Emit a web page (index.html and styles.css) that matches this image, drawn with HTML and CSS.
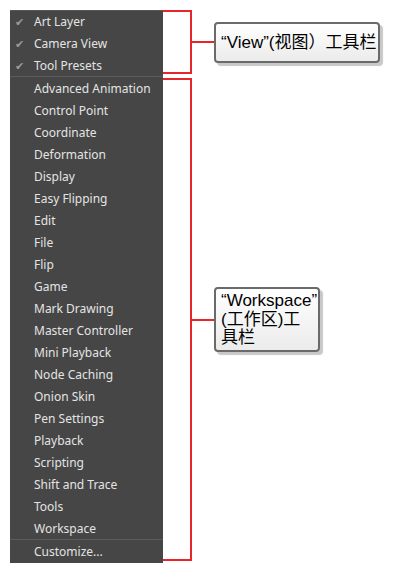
FILE: index.html
```html
<!DOCTYPE html>
<html>
<head>
<meta charset="utf-8">
<link rel="stylesheet" href="styles.css">
</head>
<body>
<div class="page">
  <div class="menu">
    <div class="item checked"><span class="check">✔</span>Art Layer</div>
    <div class="item checked"><span class="check">✔</span>Camera View</div>
    <div class="item checked"><span class="check">✔</span>Tool Presets</div>
    <div class="sep"></div>
    <div class="item">Advanced Animation</div>
    <div class="item">Control Point</div>
    <div class="item">Coordinate</div>
    <div class="item">Deformation</div>
    <div class="item">Display</div>
    <div class="item">Easy Flipping</div>
    <div class="item">Edit</div>
    <div class="item">File</div>
    <div class="item">Flip</div>
    <div class="item">Game</div>
    <div class="item">Mark Drawing</div>
    <div class="item">Master Controller</div>
    <div class="item">Mini Playback</div>
    <div class="item">Node Caching</div>
    <div class="item">Onion Skin</div>
    <div class="item">Pen Settings</div>
    <div class="item">Playback</div>
    <div class="item">Scripting</div>
    <div class="item">Shift and Trace</div>
    <div class="item">Tools</div>
    <div class="item">Workspace</div>
    <div class="sep"></div>
    <div class="item">Customize...</div>
  </div>
  <div class="notes">
    <div class="group g1">
      <div class="bracket b1"></div>
      <div class="stub"></div>
      <div class="callout c1">“View”(视图）工具栏</div>
    </div>
    <div class="group g2">
      <div class="bracket b2"></div>
      <div class="stub"></div>
      <div class="callout c2">“Workspace”<br>(工作区)工<br>具栏</div>
    </div>
  </div>
</div>
</body>
</html>
```
FILE: styles.css
```css
html, body {
  margin: 0;
  padding: 0;
  background: #ffffff;
}
.page {
  display: flex;
  align-items: flex-start;
  padding: 10px 0 0 10px;
}
.menu {
  width: 153px;
  background: #464646;
  box-shadow: inset 0 1px 0 #575757;
  padding-bottom: 1px;
  font-family: "Noto Sans", "Open Sans", sans-serif;
  font-size: 12px;
  color: #e4e4e4;
}
.item {
  position: relative;
  height: 21px;
  padding-top: 1px;
  line-height: 22px;
  padding-left: 24px;
  white-space: nowrap;
}
.check {
  position: absolute;
  left: 5px;
  top: 1px;
  font-size: 11px;
  color: #9a9a9a;
}
.sep {
  height: 1px;
  background: #5c5c5c;
}
.notes {
  display: flex;
  flex-direction: column;
  gap: 4px;
}
.group {
  display: flex;
  align-items: center;
}
.bracket {
  width: 27px;
  border: 2px solid #e5262b;
  border-left: none;
}
.b1 { height: 60px; }
.b2 { height: 479px; }
.stub {
  width: 22px;
  height: 2px;
  background: #e5262b;
}
.callout {
  border: 2px solid #6a6a6a;
  border-radius: 4px;
  background: linear-gradient(#ffffff, #ebebeb);
  box-shadow: 3px 3px 1px #c8c8c8;
  font-family: "Liberation Sans", "Noto Sans CJK SC", sans-serif;
  font-size: 17px;
  color: #000;
  padding: 0 5px;
  white-space: nowrap;
}
.c1 {
  height: 37px;
  line-height: 37px;
  width: 152px;
}
.c2 {
  width: 92px;
  height: 58px;
  padding-top: 3px;
  line-height: 18.5px;
}
```
